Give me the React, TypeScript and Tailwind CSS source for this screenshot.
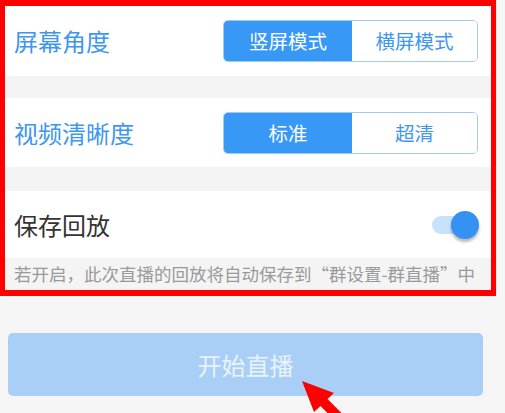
import React from "react";

const font = { fontFamily: '"Noto Sans CJK SC", "Noto Sans", sans-serif' };

function Segment({ left, right }: { left: string; right: string }) {
  return (
    <div className="flex h-[42px] w-[255px] overflow-hidden rounded-[5px] border border-[#9fcbf6]">
      <div className="flex w-[128px] items-center justify-center bg-[#3898f6] text-[19.5px] text-white">
        {left}
      </div>
      <div className="flex flex-1 items-center justify-center bg-white text-[19.5px] text-[#3d97ef]">
        {right}
      </div>
    </div>
  );
}

export default function App() {
  return (
    <div className="relative h-[413px] w-[505px] overflow-hidden bg-[#f5f5f5]" style={font}>
      <div className="flex">
        <div className="w-[496px] border-x-[5px] border-y-[6px] border-[#ff0000] bg-[#f4f4f4]">
          <div className="flex h-[70px] items-center justify-between bg-white pl-[9px] pr-[13px]">
            <span className="text-[24px] leading-none text-[#3d97ef]">屏幕角度</span>
            <Segment left="竖屏模式" right="横屏模式" />
          </div>
          <div className="h-[22px]" />
          <div className="flex h-[69px] items-center justify-between bg-white pl-[9px] pr-[13px]">
            <span className="text-[24px] leading-none text-[#3d97ef]">视频清晰度</span>
            <Segment left="标准" right="超清" />
          </div>
          <div className="h-[24px]" />
          <div className="flex h-[67px] items-center justify-between bg-white pl-[9px] pr-[12px]">
            <span className="text-[24px] leading-none text-[#333333]">保存回放</span>
            <div className="relative h-[30px] w-[47px]">
              <div className="absolute left-0 top-[6px] h-[18px] w-[38px] rounded-full bg-[#c7e2fb]" />
              <div className="absolute right-0 top-[1px] h-[28px] w-[28px] rounded-full bg-[#3591f2] shadow-[0_3px_3px_rgba(0,0,0,0.28)]" />
            </div>
          </div>
          <div className="flex h-[32px] items-center pl-[9px] text-[17.5px] leading-none text-[#9a9a9a]">
            若开启，此次直播的回放将自动保存到“群设置-群直播”中
          </div>
        </div>
        <div className="flex-1 border-l border-[#ececec] bg-[#f6f6f6]" />
      </div>
      <div className="px-[8px] pr-[22px] pt-[37px]">
        <div className="flex h-[63px] items-center justify-center rounded-[5px] bg-[#a9cff7] text-[24px] text-[#eaf3fd]">
          开始直播
        </div>
      </div>
      <svg className="absolute left-0 top-0" width="505" height="413" viewBox="0 0 505 413">
        <polygon
          points="302,381 334,393 327.5,399 357.5,429 350.5,436 320.5,406 314,412"
          fill="#ff0000"
        />
      </svg>
    </div>
  );
}
